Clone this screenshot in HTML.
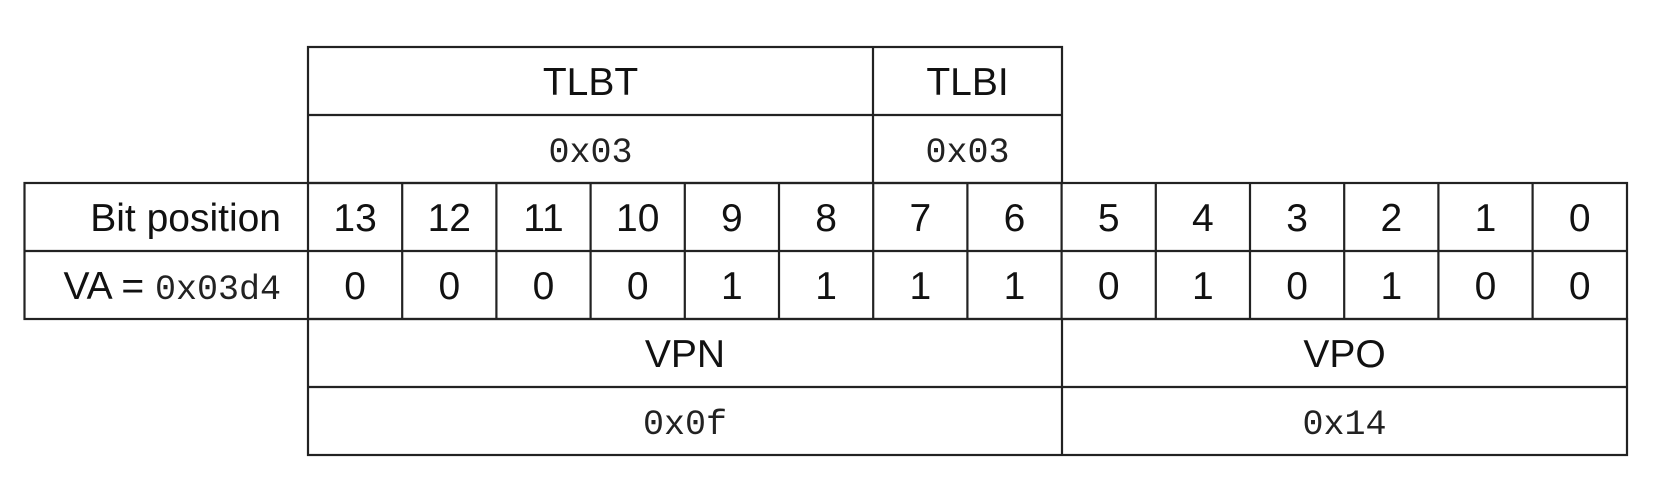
<!DOCTYPE html>
<html><head><meta charset="utf-8"><style>
html,body{margin:0;padding:0;background:#fff;}
svg{display:block}
.s{font-family:"Liberation Sans",Arial,sans-serif;font-size:39px;fill:#111}
.m{font-family:"Liberation Mono","Courier New",monospace;font-size:35px;fill:#222}
</style></head><body>
<svg width="1666" height="504" viewBox="0 0 1666 504" xmlns="http://www.w3.org/2000/svg">
<g stroke="#222" stroke-width="2.2" fill="none">
<rect x="308" y="47" width="754" height="136"/>
<line x1="308" y1="115" x2="1062" y2="115"/>
<line x1="873" y1="47" x2="873" y2="183"/>
<rect x="24.5" y="183" width="1602.5" height="136"/>
<line x1="24.5" y1="251" x2="1627" y2="251"/>
<line x1="308" y1="183" x2="308" y2="319"/>
<line x1="402.2" y1="183" x2="402.2" y2="319"/>
<line x1="496.4" y1="183" x2="496.4" y2="319"/>
<line x1="590.6" y1="183" x2="590.6" y2="319"/>
<line x1="684.8" y1="183" x2="684.8" y2="319"/>
<line x1="779" y1="183" x2="779" y2="319"/>
<line x1="873.2" y1="183" x2="873.2" y2="319"/>
<line x1="967.4" y1="183" x2="967.4" y2="319"/>
<line x1="1061.6" y1="183" x2="1061.6" y2="319"/>
<line x1="1155.8" y1="183" x2="1155.8" y2="319"/>
<line x1="1250" y1="183" x2="1250" y2="319"/>
<line x1="1344.2" y1="183" x2="1344.2" y2="319"/>
<line x1="1438.4" y1="183" x2="1438.4" y2="319"/>
<line x1="1532.6" y1="183" x2="1532.6" y2="319"/>
<rect x="308" y="319" width="1319" height="136"/>
<line x1="308" y1="387" x2="1627" y2="387"/>
<line x1="1062" y1="319" x2="1062" y2="455"/>
</g>
<g text-anchor="middle">
<text class="s" x="590.5" y="95">TLBT</text>
<text class="s" x="967.5" y="95">TLBI</text>
<text class="m" x="590.5" y="162">0x03</text>
<text class="m" x="967.5" y="162">0x03</text>
<text class="s" x="685" y="367">VPN</text>
<text class="s" x="1344.5" y="367">VPO</text>
<text class="m" x="685" y="434">0x0f</text>
<text class="m" x="1344.5" y="434">0x14</text>
</g>
<g text-anchor="middle" class="s">
<text class="s" x="355.1" y="231">13</text><text class="s" x="449.3" y="231">12</text><text class="s" x="543.5" y="231">11</text><text class="s" x="637.7" y="231">10</text><text class="s" x="731.9" y="231">9</text><text class="s" x="826.1" y="231">8</text><text class="s" x="920.3" y="231">7</text><text class="s" x="1014.5" y="231">6</text><text class="s" x="1108.7" y="231">5</text><text class="s" x="1202.9" y="231">4</text><text class="s" x="1297.1" y="231">3</text><text class="s" x="1391.3" y="231">2</text><text class="s" x="1485.5" y="231">1</text><text class="s" x="1579.7" y="231">0</text>
<text class="s" x="355.1" y="299">0</text><text class="s" x="449.3" y="299">0</text><text class="s" x="543.5" y="299">0</text><text class="s" x="637.7" y="299">0</text><text class="s" x="731.9" y="299">1</text><text class="s" x="826.1" y="299">1</text><text class="s" x="920.3" y="299">1</text><text class="s" x="1014.5" y="299">1</text><text class="s" x="1108.7" y="299">0</text><text class="s" x="1202.9" y="299">1</text><text class="s" x="1297.1" y="299">0</text><text class="s" x="1391.3" y="299">1</text><text class="s" x="1485.5" y="299">0</text><text class="s" x="1579.7" y="299">0</text>
</g>
<text class="s" x="281" y="231" text-anchor="end">Bit position</text>
<text x="281" y="299" text-anchor="end"><tspan class="s">VA = </tspan><tspan class="m">0x03d4</tspan></text>
</svg>
</body></html>
